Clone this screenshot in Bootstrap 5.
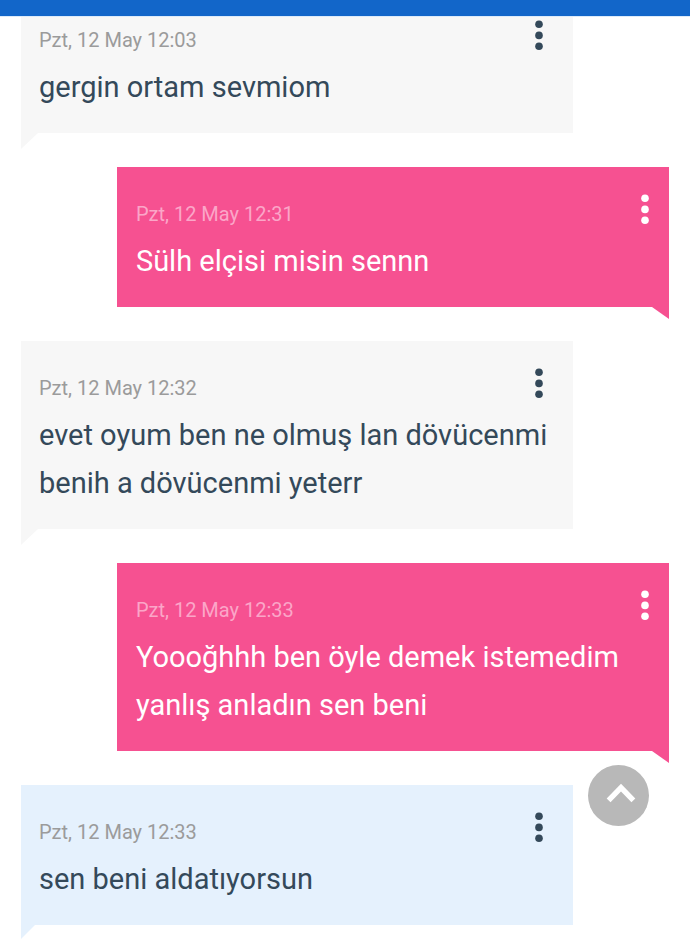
<!DOCTYPE html>
<html lang="tr">
<head>
<meta charset="utf-8">
<meta name="viewport" content="width=device-width, initial-scale=1">
<title>Mesajlar</title>
<link href="https://cdn.jsdelivr.net/npm/bootstrap@5.3.0/dist/css/bootstrap.min.css" rel="stylesheet">
<style>
  body { font-family: Roboto, "Liberation Sans", sans-serif; background: #fff; }
  .top-bar { height: 17px; background: #1266c9; border-bottom: 1px solid #dcebfa; }
  /* the conversation is scrolled slightly under the bar */
  .chat { margin-top: -7px; padding: 0 21px 16px; gap: 34px; }
  .bubble { width: 85.2%; padding: 24px 20px 22px 18px; background: var(--tone); color: #34495a; }
  .bubble::after { content: ""; position: absolute; top: 100%; background: var(--tone); }
  .received { --tone: #f7f7f7; }
  .received::after { left: 0; width: 17px; height: 16px; clip-path: polygon(0 0, 100% 0, 0 100%); }
  .received .bubble-head { padding-right: 10px; }
  .unread { --tone: #e5f1fd; }
  .unread::after { width: 14px; height: 14px; }
  .sent { --tone: #f65191; color: #fff; padding-left: 19px; }
  .sent::after { right: 0; width: 17px; height: 12px; clip-path: polygon(0 0, 100% 0, 100% 100%); }
  .stamp { font-size: 20px; line-height: 46px; color: #9b9b9b; }
  .sent .stamp { color: #fba6c8; }
  .message { font-size: 29px; line-height: 48px; }
  .menu-btn { padding: 3px 0; line-height: 1; color: inherit; }
  .to-top { right: 41px; bottom: 117px; width: 61px; height: 61px; background: #b8b8b8; z-index: 1020; }
</style>
<script src="https://cdn.jsdelivr.net/npm/bootstrap@5.3.0/dist/js/bootstrap.bundle.min.js"></script>
</head>
<body>
<svg class="d-none" aria-hidden="true">
  <symbol id="dots" viewBox="0 0 8 30"><circle cx="4" cy="4.2" r="3.8"/><circle cx="4" cy="15.4" r="3.8"/><circle cx="4" cy="26.2" r="3.8"/></symbol>
</svg>
<header class="top-bar fixed-top"></header>
<main class="chat d-flex flex-column">
  <article class="bubble received position-relative align-self-start">
    <div class="bubble-head d-flex justify-content-between align-items-start">
      <time class="stamp">Pzt, 12 May 12:03</time>
      <button type="button" class="menu-btn d-flex border-0 bg-transparent" aria-label="Seçenekler"><svg width="8" height="30" fill="currentColor"><use href="#dots"/></svg></button>
    </div>
    <p class="message mb-0">gergin ortam sevmiom</p>
  </article>
  <article class="bubble sent position-relative align-self-end">
    <div class="bubble-head d-flex justify-content-between align-items-start">
      <time class="stamp">Pzt, 12 May 12:31</time>
      <button type="button" class="menu-btn d-flex border-0 bg-transparent" aria-label="Seçenekler"><svg width="8" height="30" fill="currentColor"><use href="#dots"/></svg></button>
    </div>
    <p class="message mb-0">Sülh elçisi misin sennn</p>
  </article>
  <article class="bubble received position-relative align-self-start">
    <div class="bubble-head d-flex justify-content-between align-items-start">
      <time class="stamp">Pzt, 12 May 12:32</time>
      <button type="button" class="menu-btn d-flex border-0 bg-transparent" aria-label="Seçenekler"><svg width="8" height="30" fill="currentColor"><use href="#dots"/></svg></button>
    </div>
    <p class="message mb-0">evet oyum ben ne olmuş lan dövücenmi benih a dövücenmi yeterr</p>
  </article>
  <article class="bubble sent position-relative align-self-end">
    <div class="bubble-head d-flex justify-content-between align-items-start">
      <time class="stamp">Pzt, 12 May 12:33</time>
      <button type="button" class="menu-btn d-flex border-0 bg-transparent" aria-label="Seçenekler"><svg width="8" height="30" fill="currentColor"><use href="#dots"/></svg></button>
    </div>
    <p class="message mb-0">Yoooğhhh ben öyle demek istemedim yanlış anladın sen beni</p>
  </article>
  <article class="bubble received unread position-relative align-self-start">
    <div class="bubble-head d-flex justify-content-between align-items-start">
      <time class="stamp">Pzt, 12 May 12:33</time>
      <button type="button" class="menu-btn d-flex border-0 bg-transparent" aria-label="Seçenekler"><svg width="8" height="30" fill="currentColor"><use href="#dots"/></svg></button>
    </div>
    <p class="message mb-0">sen beni aldatıyorsun</p>
  </article>
</main>
<button type="button" class="to-top position-fixed rounded-circle border-0 p-0 d-flex" aria-label="Yukarı çık">
  <svg width="61" height="61" viewBox="0 0 61 61" fill="none" stroke="#fff" stroke-width="5.4"><path d="M20.6 35.3 33 22.6 45.4 35.3"/></svg>
</button>
</body>
</html>
